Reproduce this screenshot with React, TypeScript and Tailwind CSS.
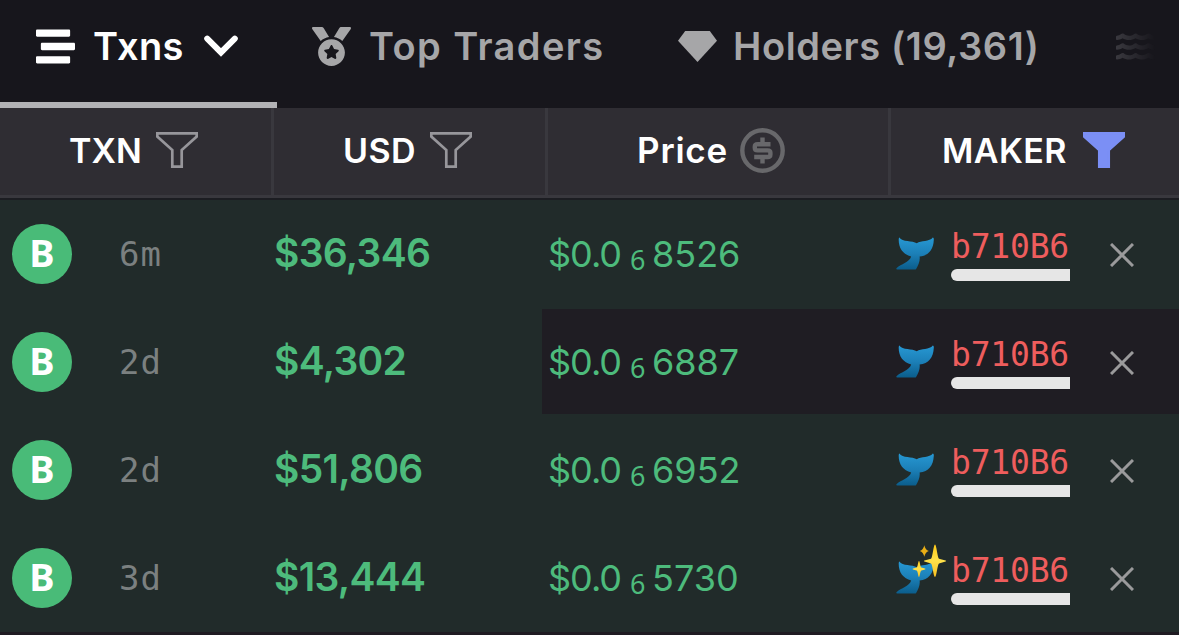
import { FaMedal, FaStream, FaWater } from "react-icons/fa";

const txns = [
  { age: "6m", usd: "$36,346", digits: "8526" },
  { age: "2d", usd: "$4,302", digits: "6887", highlighted: true },
  { age: "2d", usd: "$51,806", digits: "6952" },
  { age: "3d", usd: "$13,444", digits: "5730", fresh: true },
];

function Funnel({ active = false }: { active?: boolean }) {
  return (
    <svg
      viewBox="0 0 42 36"
      className={`h-9 w-[42px] shrink-0 ${active ? "fill-[#7b8ff5] stroke-[#7b8ff5]" : "fill-none stroke-[#97969b]"}`}
    >
      <path d="M1.3 1.3H40.7V4.6L25.7 18V34.7H16.3V18L1.3 4.6Z" strokeWidth="2.7" />
    </svg>
  );
}

function DollarCircle() {
  return (
    <svg viewBox="0 0 45 45" className="size-[45px] shrink-0 fill-none stroke-[#68686b]">
      <circle cx="22.5" cy="22.5" r="20.2" strokeWidth="4.4" />
      <path
        d="M30.5 16.3H17.6Q14.8 16.3 14.8 18.6V20Q14.8 22.4 17.6 22.4H27.6Q30.4 22.4 30.4 24.8V26.5Q30.4 29 27.6 29H14.2M22.5 9.5V16M22.5 29.5V35.5"
        strokeWidth="4.4"
      />
    </svg>
  );
}

function WhaleTail() {
  return (
    <svg viewBox="0 0 38 33" className="h-[33px] w-[38px]">
      <defs>
        <linearGradient id="tail" x1="0" y1="0" x2="0" y2="1">
          <stop offset="0" stopColor="#2798d3" />
          <stop offset="0.5" stopColor="#1c80b8" />
          <stop offset="1" stopColor="#0b5d8b" />
        </linearGradient>
      </defs>
      <path
        d="M3.4.4C6.2 5.2 16.5 3.2 20.8 6.2C25 3.2 33.5 4.8 36.8.4Q38 .4 37.8 2.8C37.4 12.8 32.5 18.8 23.6 19.5C24.3 23.5 22.5 28.5 20 32.2Q19.6 32.6 18.7 32.6H1.2Q-.4 32.2.7 31C5.2 26.6 13 25.7 15.2 19.4C7.2 17.3 2.6 11.5 2.7 2.4Q2.8.5 3.4.4Z"
        fill="url(#tail)"
      />
    </svg>
  );
}

function Sparkles() {
  return (
    <svg viewBox="0 0 36 34" className="absolute -top-[17px] left-[15px] h-[34px] w-9">
      <defs>
        <linearGradient id="spark" x1="0" y1="0" x2="0" y2="1">
          <stop offset="0" stopColor="#ffca18" />
          <stop offset="0.5" stopColor="#ffe14a" />
          <stop offset="1" stopColor="#f6c022" />
        </linearGradient>
      </defs>
      <path d="M24 .6C25.5 .6 26.5 14.2 28 14.8L34.6 16.4Q35.8 17 34.6 17.6L28 19.4C26.5 20 25.5 33 24 33C22.5 33 21.5 20 20 19.4L13.4 17.6Q12.2 17 13.4 16.4L20 14.8C21.5 14.2 22.5 .6 24 .6Z" fill="url(#spark)" />
      <path d="M8 17C9 17 9 23 10.4 23.6L14 24.5Q15 25 14 25.5L10.4 26.6C9 27 9 33 8 33C7 33 7 27 5.6 26.6L2 25.5Q1 25 2 24.5L5.6 23.6C7 23 7 17 8 17Z" fill="url(#spark)" />
      <path d="M13.3 1.2Q14.3 6 17.8 7Q14.3 8 13.3 12.8Q12.3 8 8.8 7Q12.3 6 13.3 1.2Z" fill="#e9ae16" />
    </svg>
  );
}

function Tabs() {
  return (
    <nav className="flex h-[108px] bg-[#17161c] font-semibold whitespace-nowrap text-[#a6a6a8]">
      <div className="flex w-[277px] items-center border-b-[6px] border-[#b2b2b5] pb-2.5 pl-9 text-white">
        <FaStream className="size-[39px] shrink-0" />
        <span className="ml-[18px] w-[91px] text-[38px] tracking-[0.4px]">Txns</span>
        <svg viewBox="0 0 34 22" className="ml-5 h-[22px] w-[34px] fill-none stroke-current">
          <path d="M3.2 3.6L17 17.4L30.8 3.6" strokeWidth="6" strokeLinecap="round" />
        </svg>
      </div>
      <div className="flex items-center pb-4 pl-[35px]">
        <FaMedal className="size-[39px] shrink-0" />
        <span className="ml-[18px] w-[235px] text-[38px] tracking-[1.4px]">Top Traders</span>
      </div>
      <div className="flex items-center pb-4 pl-[74px]">
        <svg viewBox="0 0 39 31" className="h-[31px] w-[39px] shrink-0 fill-current">
          <path d="M7.2 0H31.8L39 9.8L19.5 31L0 9.8Z" />
        </svg>
        <span className="ml-4 w-[310px] text-[38px] tracking-[0.6px]">Holders (19,361)</span>
      </div>
      <div className="flex items-center pb-4 pl-[73px]">
        <FaWater className="size-[39px] text-[#3a393f] [mask-image:linear-gradient(to_right,black,transparent)]" />
      </div>
    </nav>
  );
}

function TableHead() {
  return (
    <div className="flex h-[93px] border-b-[3px] border-[#1c1d22] bg-[#2f2d33] text-[34px] font-semibold text-white">
      <div className="flex w-[274px] items-center border-r-[3px] border-b-[3px] border-[#39383e] pb-[3px] pl-[69px]">
        <span className="w-[87px]">TXN</span>
        <Funnel />
      </div>
      <div className="flex w-[274px] items-center border-r-[3px] border-b-[3px] border-[#39383e] pb-[3px] pl-[69px]">
        <span className="w-[87px] tracking-[0.4px]">USD</span>
        <Funnel />
      </div>
      <div className="flex w-[343px] items-center border-r-[3px] border-b-[3px] border-[#39383e] pb-[3px] pl-[89px]">
        <span className="w-[103px] text-[35px] tracking-[0.8px]">Price</span>
        <DollarCircle />
      </div>
      <div className="flex flex-1 items-center border-b-[3px] border-[#39383e] pb-[3px] pl-[51px]">
        <span className="w-[141px] tracking-[0.4px]">MAKER</span>
        <Funnel active />
      </div>
    </div>
  );
}

function Row({ txn }: { txn: (typeof txns)[0] }) {
  return (
    <div className="flex h-[108px] text-[#4dbb7c]">
      <div className="flex w-[274px] items-center pl-3">
        <div className="flex size-[60px] items-center justify-center rounded-full bg-[#49bb78] pb-[3px] font-['Noto_Sans'] text-[38px] font-bold text-white">
          B
        </div>
        <span className="ml-[47px] font-['DejaVu_Sans_Mono'] text-[34px] tracking-[1px] text-[#7b8080]">{txn.age}</span>
      </div>
      <div className="flex w-[268px] items-center pb-0.5 text-[39px] font-semibold tracking-[-0.7px]">{txn.usd}</div>
      <div
        className={`mt-px mb-0.5 flex flex-1 items-center ${txn.highlighted ? "bg-[#1f1d23]" : ""}`}
      >
        <div className="flex w-[354px] items-center pl-1.5 text-[36px]">
          <span className="w-[82px] tracking-[-1px]">$0.0</span>
          <span className="w-[22px] pt-3.5 font-['Noto_Sans'] text-[27px]">6</span>
          <span>{txn.digits}</span>
        </div>
        <div className="relative">
          <WhaleTail />
          {txn.fresh && <Sparkles />}
        </div>
        <div className="ml-[17px] w-[119px] pt-0.5">
          <div className="-mt-0.5 pb-0.5 font-['DejaVu_Sans_Mono'] text-[33px] leading-10 tracking-[-0.2px] text-[#ee5d5d]">b710B6</div>
          <div className="h-3 rounded-l-full bg-[#e6e6e6]" />
        </div>
        <svg viewBox="0 0 24 24" className="mt-[3px] ml-10 size-6 stroke-[#9a9a9b]">
          <path d="M1 1L23 23M23 1L1 23" strokeWidth="3" />
        </svg>
      </div>
    </div>
  );
}

export default function App() {
  return (
    <div className="h-[635px] w-[1179px] overflow-hidden bg-[#1f1b22] font-['Inter',sans-serif]">
      <Tabs />
      <TableHead />
      <div className="-mt-px bg-[#212b2a]">
        {txns.map((txn, i) => (
          <Row key={i} txn={txn} />
        ))}
      </div>
    </div>
  );
}
